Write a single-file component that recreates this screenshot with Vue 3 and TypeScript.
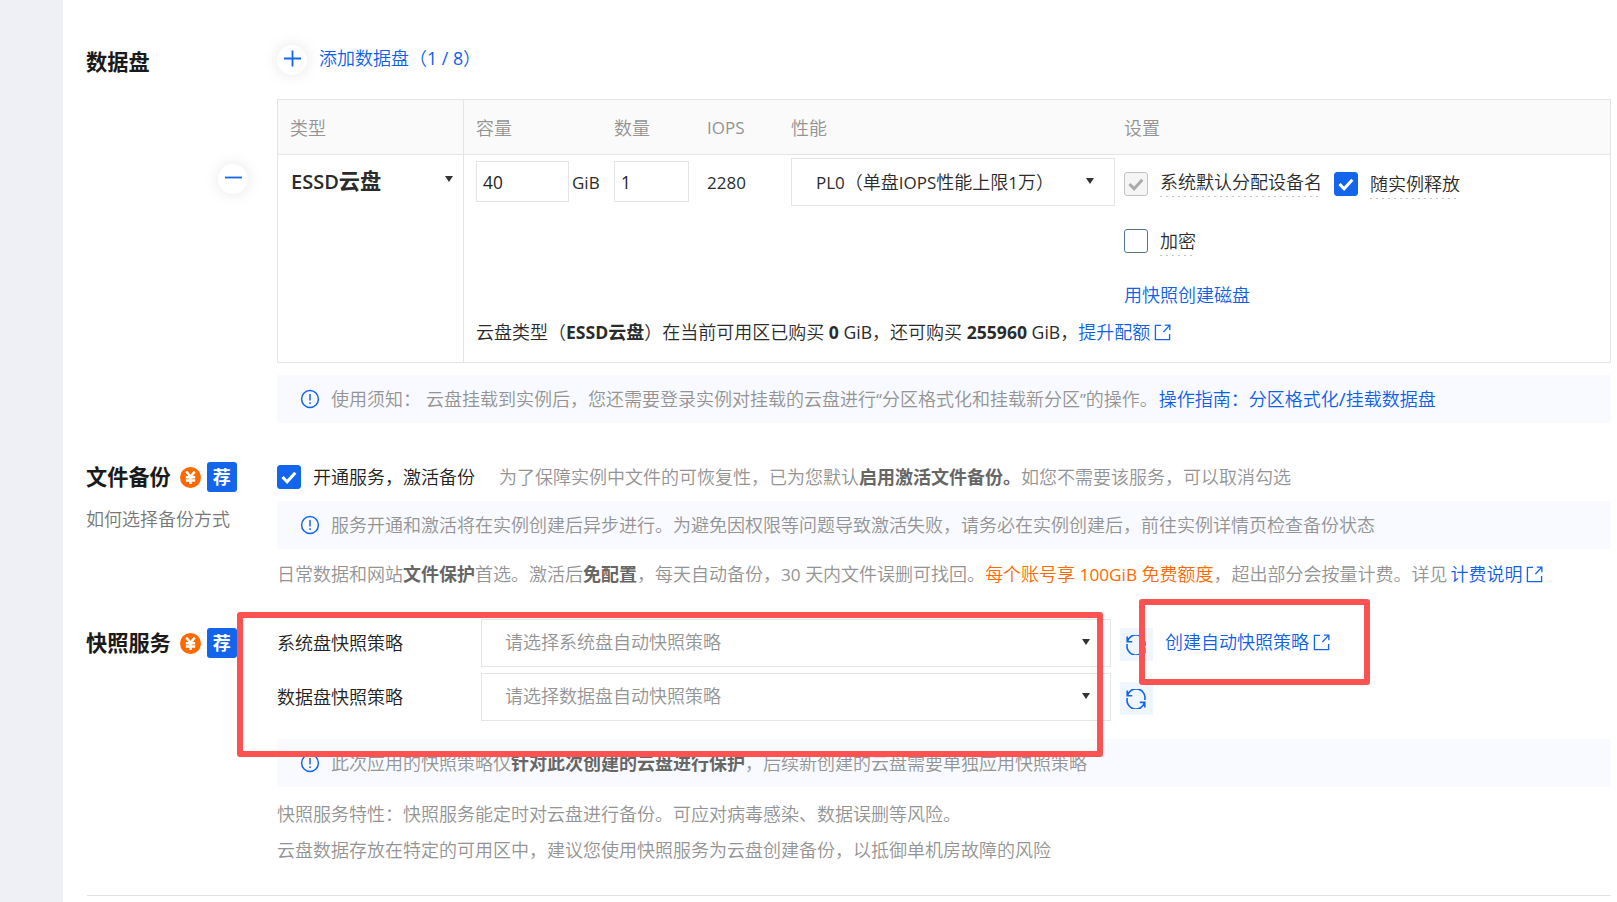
<script setup lang="ts">
import { ref } from 'vue'

interface Policy {
  label: string
  placeholder: string
}

const capacity = ref('40')
const amount = ref('1')
const policies: Policy[] = [
  { label: '系统盘快照策略', placeholder: '请选择系统盘自动快照策略' },
  { label: '数据盘快照策略', placeholder: '请选择数据盘自动快照策略' },
]
</script>

<template>
  <div class="page">
    <aside class="rail"></aside>
    <main class="main">
      <section class="section disks">
        <div class="side">
          <h3 class="title">数据盘</h3>
          <button class="round minus" aria-label="remove">
            <svg width="18" height="18" viewBox="0 0 18 18"><path d="M1 7.5h17" /></svg>
          </button>
        </div>
        <div class="content">
          <div class="add">
            <button class="round" aria-label="add">
              <svg width="18" height="18" viewBox="0 0 18 18"><path d="M1 7.5h17M9.5 -.5v16" /></svg>
            </button>
            <a class="link">添加数据盘（<span class="en">1 / 8</span>）</a>
          </div>

          <div class="table">
            <div class="th type">类型</div>
            <div class="th cols">
              <span>容量</span><span>数量</span><span class="en">IOPS</span><span>性能</span><span>设置</span>
            </div>
            <div class="td type">
              <span class="kind"><span class="en">ESSD</span><b>云盘</b></span>
              <i class="caret"></i>
            </div>
            <div class="td">
              <div class="cols values">
                <div class="field">
                  <input v-model="capacity" class="box wide" /><span class="en">GiB</span>
                </div>
                <div class="field"><input v-model="amount" class="box narrow" /></div>
                <div class="iops en">2280</div>
                <div class="perf">
                  <div class="select">
                    <span><span class="en">PL0</span>（单盘<span class="en">IOPS</span>性能上限<span class="en">1</span>万）</span>
                    <i class="caret"></i>
                  </div>
                </div>
                <div class="settings">
                  <div class="opts">
                    <span class="check disabled"><svg viewBox="0 0 24 24"><path d="M5.5 12l4.6 4.8 8.2-9" /></svg></span>
                    <span class="dotted">系统默认分配设备名</span>
                    <span class="check on second"><svg viewBox="0 0 24 24"><path d="M5.5 12l4.6 4.8 8.2-9" /></svg></span>
                    <span class="dotted low">随实例释放</span>
                  </div>
                  <div class="opts">
                    <span class="check"></span>
                    <span class="dotted low">加密</span>
                  </div>
                  <a class="link snap">用快照创建磁盘</a>
                </div>
              </div>
              <p class="quota">
                云盘类型（<b><span class="en">ESSD</span>云盘</b>）在当前可用区已购买<span class="en">&nbsp;<b>0</b> GiB</span>，还可购买<span class="en">&nbsp;<b>255960</b> GiB</span>，<a class="link">提升配额<svg class="ext" viewBox="0 0 18 18"><path d="M7.5 1.5h-6v15h15V10.5M11.5 1.2h5.3v5.3M16.5 1.5L10 8.5" /></svg></a>
              </p>
            </div>
          </div>

          <div class="notice">
            <svg class="info" viewBox="0 0 20 20"><circle cx="10" cy="10" r="8.4" /><path d="M10 5v6.5M10 13.2v1.8" /></svg>
            <span>使用须知：<i class="gap"></i>云盘挂载到实例后，您还需要登录实例对挂载的云盘进行<span class="en">“</span>分区格式化和挂载新分区<span class="en">”</span>的操作。<a class="link guide">操作指南：分区格式化<span class="en">/</span>挂载数据盘</a></span>
          </div>
        </div>
      </section>

      <section class="section backup">
        <div class="side">
          <h3 class="title">
            <span>文件备份</span>
            <svg class="yuan" viewBox="0 0 21 21"><circle cx="10.5" cy="10.5" r="10.5" /><path d="M6.3 4.5l4.2 5.3 4.2-5.3M5.8 10.3h9.4M5.8 13.6h9.4M10.5 9.8V17" /></svg>
            <span class="badge">荐</span>
          </h3>
          <p class="hint">如何选择备份方式</p>
        </div>
        <div class="content">
          <div class="enable">
            <span class="check on"><svg viewBox="0 0 24 24"><path d="M5.5 12l4.6 4.8 8.2-9" /></svg></span>
            <span class="dark">开通服务，激活备份</span>
            <span class="muted">为了保障实例中文件的可恢复性，已为您默认<b>启用激活文件备份。</b>如您不需要该服务，可以取消勾选</span>
          </div>
          <div class="notice">
            <svg class="info" viewBox="0 0 20 20"><circle cx="10" cy="10" r="8.4" /><path d="M10 5v6.5M10 13.2v1.8" /></svg>
            <span>服务开通和激活将在实例创建后异步进行。为避免因权限等问题导致激活失败，请务必在实例创建后，前往实例详情页检查备份状态</span>
          </div>
          <p class="desc">
            日常数据和网站<b>文件保护</b>首选。激活后<b>免配置</b>，每天自动备份，<span class="en">30&nbsp;</span>天内文件误删可找回。<em>每个账号享<span class="en">&nbsp;100GiB&nbsp;</span>免费额度</em>，超出部分会按量计费。详见<a class="link fee">计费说明<svg class="ext" viewBox="0 0 18 18"><path d="M7.5 1.5h-6v15h15V10.5M11.5 1.2h5.3v5.3M16.5 1.5L10 8.5" /></svg></a>
          </p>
        </div>
      </section>

      <section class="section snapshot">
        <div class="side">
          <h3 class="title">
            <span>快照服务</span>
            <svg class="yuan" viewBox="0 0 21 21"><circle cx="10.5" cy="10.5" r="10.5" /><path d="M6.3 4.5l4.2 5.3 4.2-5.3M5.8 10.3h9.4M5.8 13.6h9.4M10.5 9.8V17" /></svg>
            <span class="badge">荐</span>
          </h3>
        </div>
        <div class="content">
          <div v-for="(p, i) in policies" :key="p.label" class="policy">
            <span class="name">{{ p.label }}</span>
            <div class="select long">
              <span>{{ p.placeholder }}</span>
              <i class="caret"></i>
            </div>
            <button class="refresh" aria-label="refresh">
              <svg width="20" height="20" viewBox="0 0 20 20">
                <path d="M1.2 1.6v5.2h5M1.6 6.4A8.7 8.7 0 0 1 18.7 11M18.8 18.6v-5.2h-5M18.4 13.6A8.7 8.7 0 0 1 1.3 9" />
              </svg>
            </button>
            <a v-if="i === 0" class="link create">创建自动快照策略<svg class="ext" viewBox="0 0 18 18"><path d="M7.5 1.5h-6v15h15V10.5M11.5 1.2h5.3v5.3M16.5 1.5L10 8.5" /></svg></a>
          </div>
          <div class="notice">
            <svg class="info" viewBox="0 0 20 20"><circle cx="10" cy="10" r="8.4" /><path d="M10 5v6.5M10 13.2v1.8" /></svg>
            <span>此次应用的快照策略仅<b>针对此次创建的云盘进行保护</b>，后续新创建的云盘需要单独应用快照策略</span>
          </div>
          <p class="para">快照服务特性：快照服务能定时对云盘进行备份。可应对病毒感染、数据误删等风险。</p>
          <p class="para">云盘数据存放在特定的可用区中，建议您使用快照服务为云盘创建备份，以抵御单机房故障的风险</p>
        </div>
      </section>
      <hr class="rule" />
    </main>
    <div class="mark mark-policies"></div>
    <div class="mark mark-create"></div>
  </div>
</template>

<style>
body {
  margin: 0;
  overflow: hidden;
}
</style>

<style scoped>
* {
  box-sizing: border-box;
}
.page {
  position: relative;
  display: flex;
  width: 1617px;
  height: 902px;
  overflow: hidden;
  background: #fff;
  color: #2b2b2b;
  font-family: 'Open Sans', 'Noto Sans CJK SC', sans-serif;
  font-size: 18px;
  font-weight: 350;
  line-height: 24px;
  white-space: nowrap;
}
.rail {
  flex: none;
  width: 63px;
  background: #eff0f5;
}
.main {
  flex: 1;
  padding-left: 23px;
}
.section {
  display: flex;
}
.side {
  flex: none;
  display: flex;
  flex-direction: column;
  width: 191px;
}
.content {
  width: 1334px;
}
p,
h3 {
  margin: 0;
}
b {
  font-weight: 700;
}
.en {
  font-size: 0.944em;
  font-weight: 400;
}
b .en {
  font-weight: 700;
}
.link {
  color: #0f5fea;
}
.title {
  display: flex;
  align-items: center;
  height: 30px;
  font-size: 21.2px;
  font-weight: 700;
  color: #1a1a1a;
}
.title > span:first-child {
  margin-top: -1px;
}
.disks {
  height: 423px;
  padding-top: 45px;
}
.disks .title {
  margin-top: 2px;
}
.round {
  display: flex;
  flex: none;
  align-items: center;
  justify-content: center;
  width: 30px;
  height: 30px;
  padding: 0;
  border: 0;
  border-radius: 50%;
  background: #fff;
  box-shadow: 0 0 16px rgba(0, 0, 0, 0.1);
}
.round svg {
  fill: none;
  stroke: #1366ec;
  stroke-width: 1.8;
  overflow: visible;
}
.minus {
  align-self: flex-end;
  margin: 87px 29px 0 0;
}
.add {
  display: flex;
  align-items: center;
  height: 30px;
  margin-bottom: 24px;
}
.add .link {
  margin: -4px 0 0 12px;
}
.add .en {
  font-size: 17.8px;
}
.table {
  display: grid;
  grid-template: 55px 207px / 186px 1fr;
  border: 1px solid #e5e5e5;
}
.th {
  padding-top: 16px;
  border-bottom: 1px solid #e5e5e5;
  background: #fafafa;
  color: #949494;
}
.th.type {
  padding-left: 12px;
}
.type {
  border-right: 1px solid #e5e5e5;
}
.cols {
  display: grid;
  grid-template-columns: 138px 93px 84px 333px 1fr;
  padding-left: 12px;
}
.td.type {
  display: flex;
  justify-content: space-between;
  padding: 14px 10px 0 13px;
}
.kind {
  font-size: 21.2px;
}
.kind .en {
  font-weight: 600;
  font-size: 20px;
}
.caret {
  flex: none;
  width: 8px;
  height: 6px;
  background: #333;
  clip-path: polygon(0 0, 100% 0, 50% 100%);
}
.type .caret {
  margin-top: 7px;
}
.values {
  height: 160px;
}
.field {
  display: flex;
  align-items: center;
  gap: 3px;
  height: 41px;
  margin-top: 6px;
}
.box {
  height: 41px;
  padding: 2px 0 1px 6px;
  border: 1px solid #e5e5e5;
  outline: 0;
  background: #fff;
  color: #222;
  font: 400 17.3px 'Open Sans', sans-serif;
}
.field .en {
  margin-top: 2px;
}
.wide {
  width: 93px;
}
.narrow {
  width: 75px;
}
.iops {
  padding-top: 16px;
}
.perf {
  padding-top: 3px;
}
.select {
  display: flex;
  align-items: center;
  justify-content: space-between;
  width: 324px;
  height: 48px;
  padding: 0 20px 0 24px;
  border: 1px solid #e5e5e5;
  background: #fff;
}
.select .caret {
  margin-top: -2px;
}
.settings {
  padding-top: 17px;
}
.opts {
  display: flex;
  height: 57px;
}
.check {
  flex: none;
  width: 24px;
  height: 24px;
  margin-right: 12px;
  border: 1px solid #557799;
  border-radius: 3px;
  background: #fff;
}
.check svg {
  display: block;
  width: 24px;
  height: 24px;
  margin: -1px;
  fill: none;
  stroke: #fff;
  stroke-width: 3;
}
.check.on {
  border-color: #1366ec;
  background: #1366ec;
}
.check.disabled {
  border-color: #c4c4c4;
  background: #f5f5f5;
}
.check.disabled svg {
  stroke: #aaa;
}
.check.second {
  margin-left: 12px;
}
.dotted {
  height: 25px;
  line-height: 21px;
  background: repeating-linear-gradient(90deg, #c4c4c4 0 2px, transparent 2px 6px) 0 100% / 100% 1px no-repeat;
}
.dotted.low {
  margin-top: 2px;
}
.snap {
  display: block;
  margin-top: -3px;
}
.quota {
  padding: 5px 0 0 12px;
}
.quota .en {
  font-size: 17.6px;
}
.ext {
  width: 17px;
  height: 17px;
  margin-left: 4px;
  vertical-align: -1.5px;
  fill: none;
  stroke: #1366ec;
  stroke-width: 1.4;
}
.notice {
  display: flex;
  align-items: center;
  height: 48px;
  padding-left: 23px;
  background: #f8faff;
  color: #949494;
}
.disks .notice {
  margin-top: 12px;
}
.guide {
  margin-left: 1px;
}
.guide .en {
  font-size: 19px;
}
.info {
  flex: none;
  width: 20px;
  height: 20px;
  margin-right: 11px;
  fill: none;
  stroke: #1366ec;
  stroke-width: 1.5;
}
.gap {
  display: inline-block;
  width: 5px;
}
.notice b,
.desc b,
.muted b {
  color: #666;
}
.yuan {
  width: 21px;
  height: 21px;
  margin: 0 6px 0 9px;
  fill: #ff6a00;
}
.yuan path {
  fill: none;
  stroke: #fff;
  stroke-width: 2.5;
}
.badge {
  width: 30px;
  height: 30px;
  border-radius: 3px;
  background: #1366ec;
  color: #fff;
  font-size: 18px;
  line-height: 30px;
  text-align: center;
}
.backup {
  height: 189px;
  padding-top: 39px;
}
.hint {
  margin-top: 15px;
  color: #777;
}
.enable {
  display: flex;
  align-items: center;
  height: 24px;
  margin: 3px 0 12px;
}
.dark {
  color: #222;
}
.muted {
  margin-left: 24px;
  color: #949494;
}
.desc {
  margin-top: 13px;
  color: #949494;
}
.desc .en {
  font-size: 17.2px;
}
.desc em {
  color: #ff6a00;
  font-style: normal;
}
.fee {
  margin-left: 3px;
}
.snapshot {
  height: 283px;
  padding-top: 7px;
}
.snapshot .title {
  margin-top: 9px;
}
.policy {
  display: flex;
  align-items: center;
  height: 54px;
}
.policy .select {
  margin-bottom: 6px;
  color: #949494;
}
.policy .caret {
  margin-top: 0;
}
.name {
  width: 204px;
  margin-top: -6px;
  color: #222;
}
.select.long {
  width: 630px;
  padding: 0 20px 2px 23px;
}
.refresh {
  display: flex;
  align-items: center;
  justify-content: center;
  width: 33px;
  height: 33px;
  margin: -3px 12px 0 9px;
  padding: 0 1px 0 0;
  border: 0;
  background: #f0f6ff;
}
.refresh svg {
  fill: none;
  stroke: #1366ec;
  stroke-width: 1.6;
}
.create {
  margin-top: -8px;
}
.snapshot .notice {
  margin: 12px 0 15px;
}
.para {
  height: 36px;
  color: #949494;
}
.rule {
  width: 1524px;
  height: 1px;
  margin: 0 0 0 1px;
  border: 0;
  background: #e2e2e2;
}
.mark {
  position: absolute;
  border: 6px solid #fd5252;
  border-radius: 3px;
}
.mark-policies {
  left: 237px;
  top: 612px;
  width: 866px;
  height: 145px;
}
.mark-create {
  left: 1139px;
  top: 599px;
  width: 231px;
  height: 86px;
}
</style>
